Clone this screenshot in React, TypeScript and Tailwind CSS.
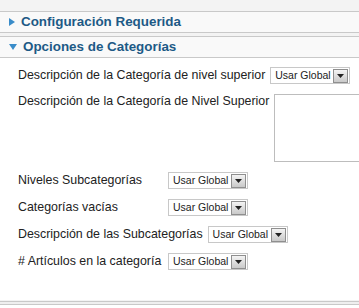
import React from "react";

function Select({ className = "" }: { className?: string }) {
  return (
    <div className={`flex h-[17px] w-[80px] shrink-0 items-center border border-[#c8c8c8] bg-white pl-[4px] pr-[1px] ${className}`}>
      <span className="flex-1 text-[10.5px] leading-none text-[#222]">Usar Global</span>
      <span className="flex h-[14px] w-[15px] items-center justify-center border border-[#8f8f8f] bg-gradient-to-b from-[#f4f4f4] to-[#c9c9c9]">
        <svg width="7" height="4" viewBox="0 0 7 4">
          <path d="M0 0h7L3.5 4z" fill="#222" />
        </svg>
      </span>
    </div>
  );
}

function Header({ open, title }: { open: boolean; title: string }) {
  return (
    <div className="flex h-[21px] items-center gap-[6px] border-b border-[#c9c9c9] bg-[#f9f9f9] pl-[9px]">
      {open ? (
        <svg width="8" height="6" viewBox="0 0 8 6">
          <path d="M0 0h8L4 6z" fill="#3a8cc9" />
        </svg>
      ) : (
        <svg width="6" height="8" viewBox="0 0 6 8">
          <path d="M0 0v8l6-4z" fill="#3a8cc9" />
        </svg>
      )}
      <span className="text-[13.4px] font-bold text-[#1d5a86]">{title}</span>
    </div>
  );
}

function Row({ label, children }: { label: string; children: React.ReactNode }) {
  return (
    <div className="flex h-[27px] items-center gap-[5px]">
      <span className="min-w-[145px] whitespace-nowrap">{label}</span>
      {children}
    </div>
  );
}

export default function App() {
  return (
    <div className="h-[308px] w-[359px] overflow-hidden bg-white font-['Liberation_Sans',Arial,sans-serif] text-[12.4px] text-[#222]">
      <div className="h-[12px] border-b border-[#c9c9c9] bg-[#f3f3f3]" />
      <Header open={false} title="Configuración Requerida" />
      <div className="h-[4px] border-b border-[#c9c9c9] bg-[#f3f3f3]" />
      <Header open title="Opciones de Categorías" />
      <div className="bg-white pl-[18px] pt-[4px]">
        <Row label="Descripción de la Categoría de nivel superior">
          <Select />
        </Row>
        <div className="mt-[5px] flex items-start gap-[5px]">
          <span className="whitespace-nowrap leading-[14px]">Descripción de la Categoría de Nivel Superior</span>
          <div className="h-[68px] w-[100px] shrink-0 border border-[#bdbdbd] bg-white" />
        </div>
        <div className="mt-[5px]">
          <Row label="Niveles Subcategorías">
            <Select />
          </Row>
          <Row label="Categorías vacías">
            <Select />
          </Row>
          <Row label="Descripción de las Subcategorías">
            <Select />
          </Row>
          <Row label="# Artículos en la categoría">
            <Select />
          </Row>
        </div>
      </div>
      <div className="mt-[25px] h-[1px] bg-[#f3f3f3]" />
      <div className="h-[4px] border-y border-[#c9c9c9] bg-[#efefef]" />
    </div>
  );
}
